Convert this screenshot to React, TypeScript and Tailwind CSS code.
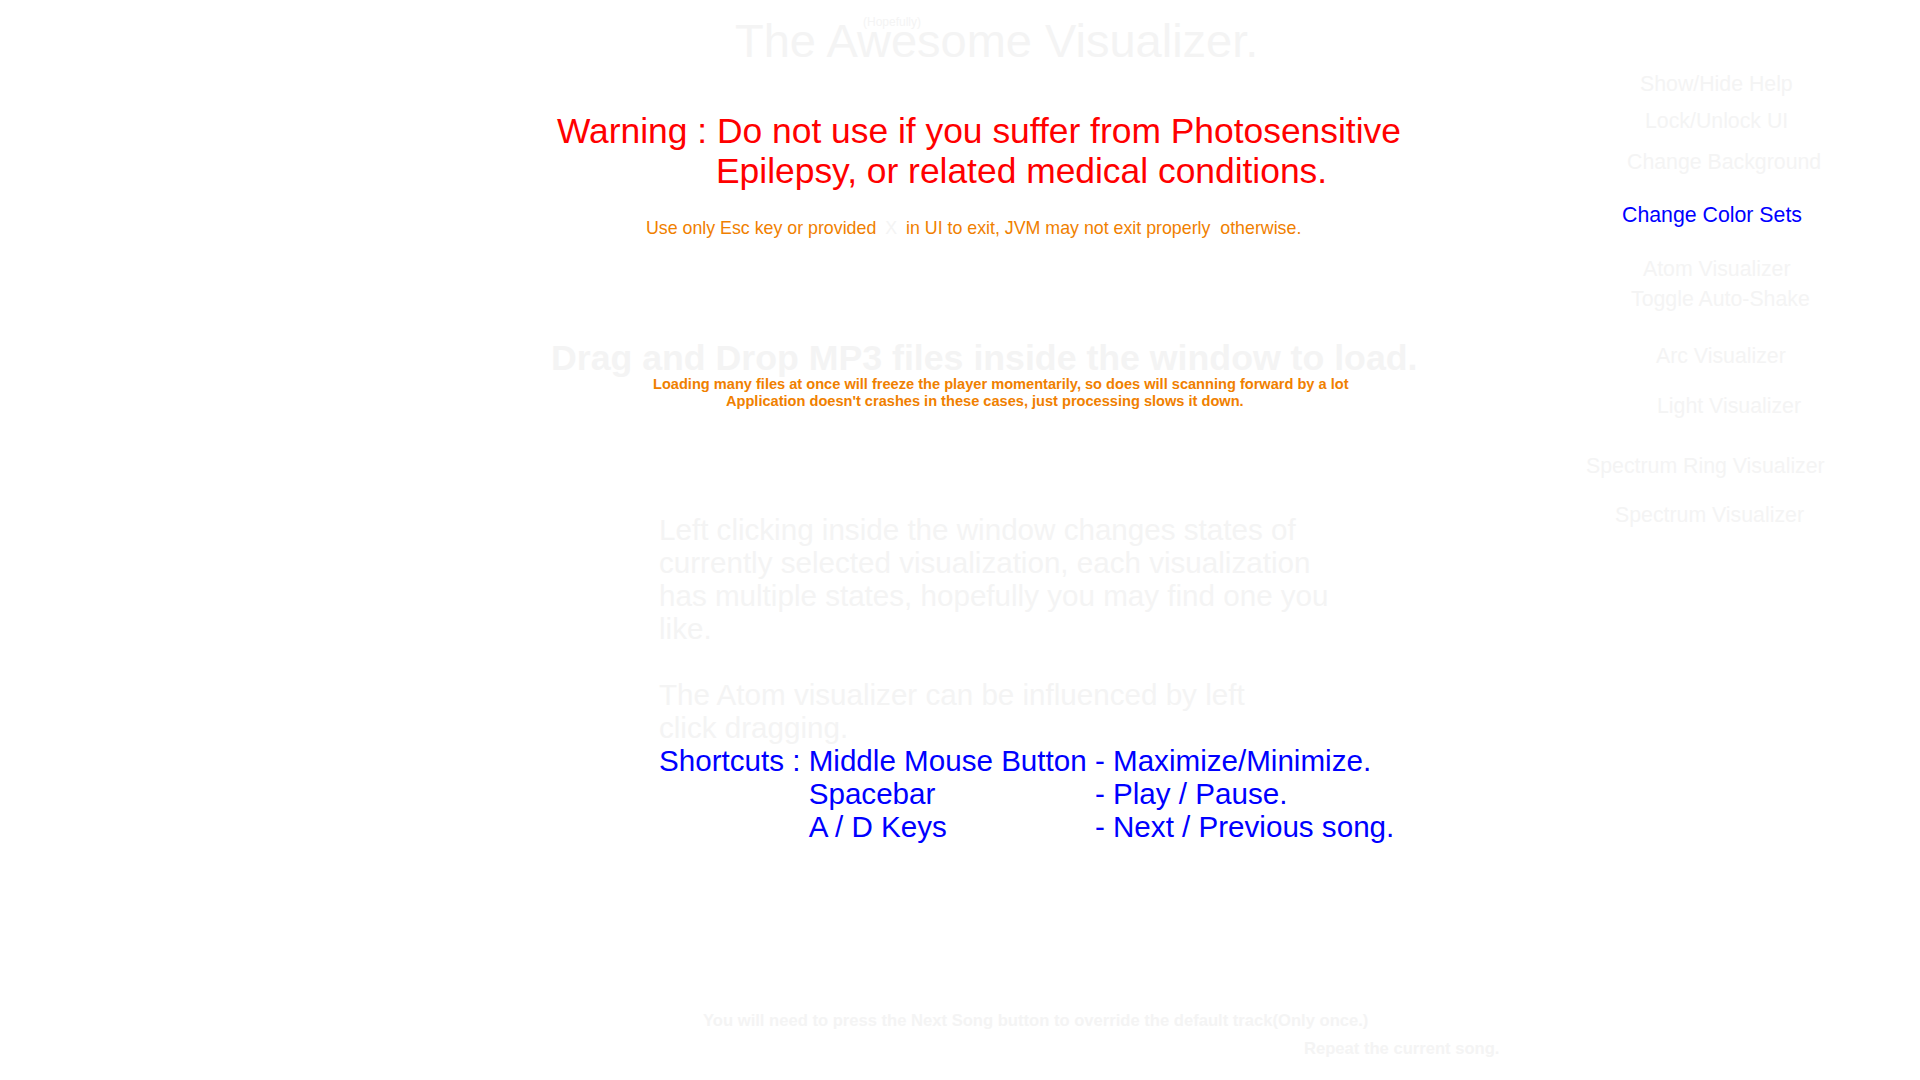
import React from 'react';

const menuItems = [
  { label: 'Show/Hide Help', cls: 'mt-[72px] pl-[54px]' },
  { label: 'Lock/Unlock UI', cls: 'mt-[13px] pl-[59px]' },
  { label: 'Change Background', cls: 'mt-[17px] pl-[41px]' },
  { label: 'Change Color Sets', cls: 'mt-[29px] pl-[36px] text-[#0000ff]' },
  { label: 'Atom Visualizer', cls: 'mt-[30px] pl-[57px]' },
  { label: 'Toggle Auto-Shake', cls: 'mt-[6px] pl-[45px]' },
  { label: 'Arc Visualizer', cls: 'mt-[33px] pl-[70px]' },
  { label: 'Light Visualizer', cls: 'mt-[26px] pl-[71px]' },
  { label: 'Spectrum Ring Visualizer', cls: 'mt-[36px] pl-0' },
  { label: 'Spectrum Visualizer', cls: 'mt-[25px] pl-[29px]' },
];

const shortcuts = [
  ['Shortcuts : ', 'Middle Mouse Button ', '- Maximize/Minimize.'],
  ['', 'Spacebar', '- Play / Pause.'],
  ['', 'A / D Keys', '- Next / Previous song.'],
];

const App: React.FC = () => {
  return (
    <div className="flex w-[1920px] h-[1080px] overflow-hidden bg-white font-['Liberation_Sans',Arial,sans-serif] text-[#f4f4f4]">
      {/* main help area */}
      <div className="flex flex-col w-[1586px] shrink-0">
        <div className="relative mt-[15px] ml-[735px] w-fit">
          <span className="absolute left-[128px] top-[1px] text-[12px] leading-[12px] whitespace-nowrap">(Hopefully)</span>
          <h1 className="text-[47px] leading-[52px] whitespace-nowrap">The Awesome Visualizer.</h1>
        </div>

        <div className="mt-[44px] text-[35.4px] leading-[40px] text-[#ff0000] whitespace-nowrap">
          <p className="ml-[557px]">Warning : Do not use if you suffer from Photosensitive</p>
          <p className="ml-[716px]">Epilepsy, or related medical conditions.</p>
        </div>

        <p className="mt-[27px] ml-[646px] text-[17.8px] leading-[20px] text-[#f08000] whitespace-pre">
          Use only Esc key or provided <span className="px-[4px] text-[#f4f4f4]">X</span> in UI to exit, JVM may not exit properly  otherwise.
        </p>

        <p className="mt-[100px] ml-[551px] text-[35.7px] leading-[40px] font-bold whitespace-nowrap">
          Drag and Drop MP3 files inside the window to load.
        </p>
        <div className="mt-[-2px] text-[14.6px] leading-[17px] font-bold text-[#f08000] whitespace-nowrap">
          <p className="ml-[653px]">Loading many files at once will freeze the player momentarily, so does will scanning forward by a lot</p>
          <p className="ml-[726px]">Application doesn't crashes in these cases, just processing slows it down.</p>
        </div>

        <div className="mt-[103px] ml-[659px] text-[29.6px] leading-[33px] whitespace-nowrap">
          <p>Left clicking inside the window changes states of</p>
          <p>currently selected visualization, each visualization</p>
          <p>has multiple states, hopefully you may find one you</p>
          <p>like.</p>
          <p className="h-[33px]" />
          <p>The Atom visualizer can be influenced by left</p>
          <p>click dragging.</p>
          <div className="grid grid-cols-[max-content_max-content_max-content] text-[#0000ff] whitespace-pre">
            {shortcuts.map((row, i) => (
              <React.Fragment key={i}>
                <span>{row[0]}</span>
                <span>{row[1]}</span>
                <span>{row[2]}</span>
              </React.Fragment>
            ))}
          </div>
        </div>

        <div className="mt-[168px] text-[16.6px] leading-[19px] font-bold whitespace-nowrap">
          <p className="ml-[703px]">You will need to press the Next Song button to override the default track(Only once.)</p>
          <p className="mt-[9px] ml-[1304px]">Repeat the current song.</p>
        </div>
      </div>

      {/* right side menu */}
      <nav className="flex flex-col flex-1 text-[21.3px] leading-[24px] whitespace-nowrap">
        {menuItems.map((item) => (
          <span key={item.label} className={item.cls}>
            {item.label}
          </span>
        ))}
      </nav>
    </div>
  );
};

export default App;
